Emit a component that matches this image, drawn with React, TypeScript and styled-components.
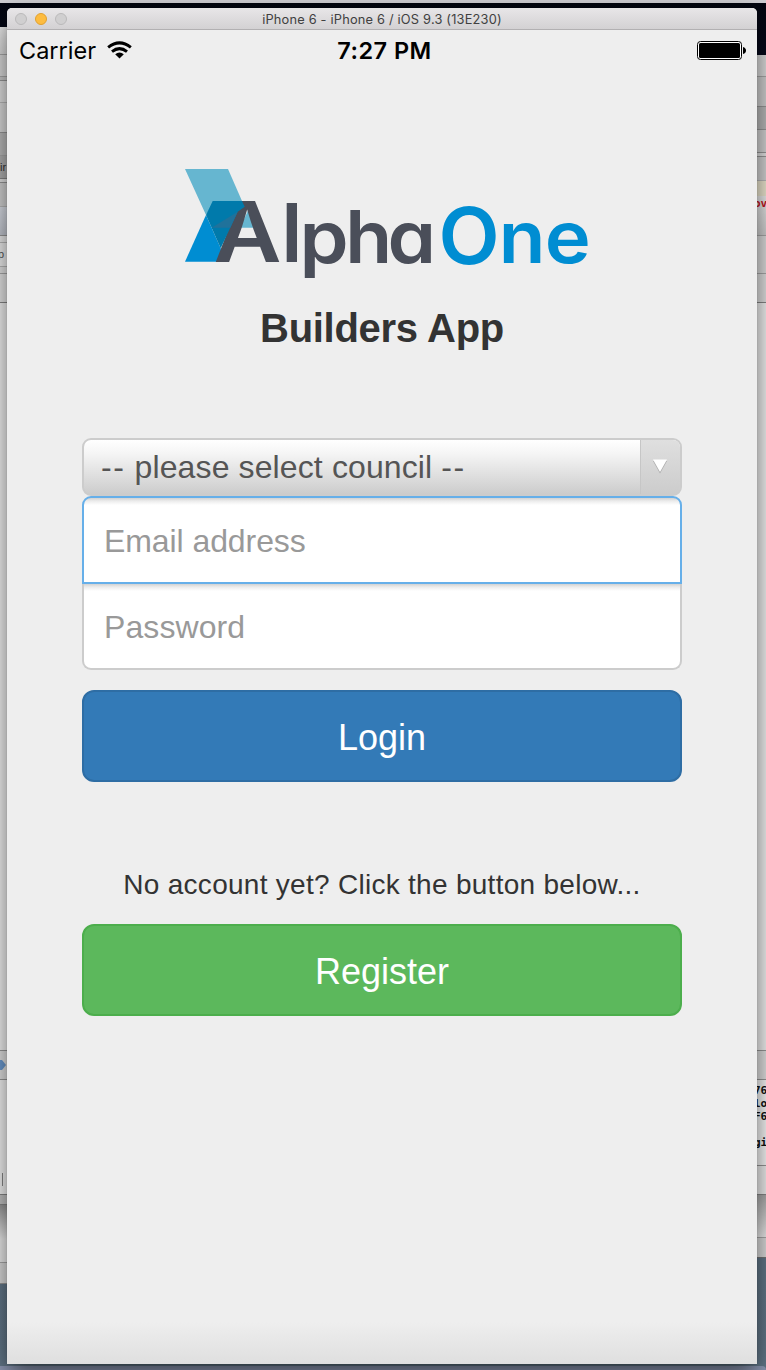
import React from 'react';
import styled, { createGlobalStyle } from 'styled-components';

const Global = createGlobalStyle`
  * { box-sizing: border-box; }
  html, body { margin: 0; padding: 0; overflow: hidden; }
`;

const helvetica = `'Liberation Sans', Arial, sans-serif`;
const system = `Inter, 'Liberation Sans', sans-serif`;

const Desktop = styled.div`
  width: 766px;
  height: 1370px;
  display: flex;
  flex-direction: column;
  overflow: hidden;
  background: linear-gradient(#03050f 0, #060a1c 60px, #566d80 61px, #64798b 100%);
`;
const MenuStrip = styled.div`
  flex: 0 0 3px;
  margin-bottom: 5px;
  background: #cfced3;
`;
const Stage = styled.div`
  display: grid;
  grid-template-columns: 7px 750px 9px;
  height: 1356px;
`;
const DockEdge = styled.div`
  flex: 0 0 4px;
  margin-top: 2px;
  background: #8f9ab6;
  border-radius: 0 5px 0 0;
`;
const Sliver = styled.div`
  display: flex;
  flex-direction: column;
  overflow: hidden;
`;
const Band = styled.div<{ $h: number; $bg: string; $line?: string }>`
  flex: 0 0 ${p => p.$h}px;
  background: ${p => p.$bg};
  border-bottom: ${p => (p.$line ? `1px solid ${p.$line}` : '0')};
  overflow: hidden;
  display: flex;
  align-items: center;
`;
const Scrap = styled.span<{ $color?: string; $shift?: number }>`
  font: 11px/13px ${helvetica};
  color: ${p => p.$color || '#333'};
  margin-left: ${p => p.$shift || 0}px;
  white-space: nowrap;
`;
const RedScrap = styled(Scrap)`
  font: bold 11px/13px 'DejaVu Sans Mono', monospace;
  align-self: flex-start;
  padding-top: 1px;
  margin-left: -3px;
`;
const LogLines = styled.pre`
  margin: 0 0 0 -3px;
  align-self: flex-start;
  padding-top: 4px;
  font: bold 11px/13px 'DejaVu Sans Mono', monospace;
  color: #111;
`;
const Tick = styled.i`
  width: 1px;
  height: 13px;
  margin: 93px 0 0 2px;
  align-self: flex-start;
  background: #888;
`;

const Window = styled.main`
  position: relative;
  z-index: 1;
  display: flex;
  flex-direction: column;
  border-radius: 5px 5px 0 0;
  overflow: hidden;
  background: linear-gradient(#eee 0, #eee calc(100% - 42px), #dfdfdf 100%);
  box-shadow: 0 0 1px rgba(0, 0, 0, 0.3), 0 10px 26px rgba(0, 0, 0, 0.6);
`;
const TitleBar = styled.header`
  flex: 0 0 22px;
  display: grid;
  grid-template-columns: 60px 1fr 60px;
  align-items: center;
  border-bottom: 1px solid #b2b0b2;
  background: linear-gradient(#e8e6e8, #d3d1d3);
`;
const Lights = styled.div`
  display: flex;
  gap: 8px;
  padding-left: 8px;
`;
const Light = styled.i<{ $on?: boolean }>`
  width: 12px;
  height: 12px;
  border-radius: 50%;
  background: ${p => (p.$on ? '#fdbc40' : '#d0cfd0')};
  border: 1px solid ${p => (p.$on ? '#e0a030' : '#bab9ba')};
`;
const Title = styled.div`
  padding-top: 2px;
  text-align: center;
  white-space: nowrap;
  color: #404040;
  font: 12.8px/19px ${system};
  letter-spacing: 0.2px;
`;

const StatusBar = styled.div`
  flex: 0 0 40px;
  display: grid;
  grid-template-columns: 1fr auto 1fr;
  align-items: center;
  padding: 0 11px 0 12px;
  color: #000;
  font: 23.5px/40px ${system};
`;
const Carrier = styled.div`
  display: flex;
  align-items: center;
  gap: 11px;
  padding-top: 2px;
  line-height: 38px;

  svg { margin-top: -2px; }
`;
const Clock = styled.div`
  padding: 2px 0 0 4px;
  font-weight: 600;
  line-height: 38px;
  letter-spacing: 0.45px;
`;
const BatterySlot = styled.div`
  display: flex;
  justify-content: flex-end;
`;

const Content = styled.section`
  display: flex;
  flex-direction: column;
  padding: 0 75px;
  font-family: ${helvetica};
`;
const LogoSlot = styled.div`
  height: 120px;
  margin: 93px 0 0 97px;
`;
const Heading = styled.h1`
  margin: 21px 0 86px;
  height: 48px;
  text-align: center;
  color: #333;
  font: bold 40px/48px ${helvetica};
  letter-spacing: -0.3px;
`;
const Select = styled.div`
  display: flex;
  height: 58px;
  border: 2px solid #ccc;
  border-radius: 9px;
  overflow: hidden;
  background: linear-gradient(#fff, #f5f5f5 25%, #ccc);
  color: #555;
  font-size: 32px;
  line-height: 55px;
`;
const SelectLabel = styled.span`
  flex: 1;
  padding-left: 17px;
  white-space: pre;
  letter-spacing: 0.12px;
`;
const Dashes = styled.span`
  letter-spacing: 1.6px;
`;
const SelectArrow = styled.span`
  width: 41px;
  margin-right: -1px;
  display: flex;
  align-items: center;
  justify-content: center;
  padding: 0 2px 2px 0;
  border-left: 1px solid #c6c6c6;
  background: linear-gradient(#dfdfdf, #ccc);
`;
const Field = styled.div<{ $focused?: boolean }>`
  height: ${p => (p.$focused ? 88 : 86)}px;
  padding-left: 20px;
  background: linear-gradient(#d2d2d2, #ececec 3px, #fff 7px);
  border: 2px solid ${p => (p.$focused ? '#66afe9' : '#ccc')};
  border-top-width: ${p => (p.$focused ? 2 : 0)}px;
  border-radius: ${p => (p.$focused ? '9px 9px 0 0' : '0 0 9px 9px')};
  color: #999;
  font-size: 32px;
  line-height: 86px;
  letter-spacing: ${p => (p.$focused ? -0.08 : 0.08)}px;
`;
const Button = styled.button<{ $bg: string; $edge: string }>`
  height: 92px;
  padding: 3px 0 0;
  border: 2px solid ${p => p.$edge};
  border-radius: 12px;
  background: ${p => p.$bg};
  color: #fff;
  font: 36px/48px ${helvetica};
`;
const LoginButton = styled(Button)`
  margin-top: 20px;
`;
const Hint = styled.p`
  margin: 82px 0 20px;
  height: 40px;
  text-align: center;
  white-space: nowrap;
  color: #333;
  font-size: 28px;
  line-height: 42px;
  letter-spacing: 0.28px;
`;

type BandData = { h: number; bg: string; line?: string; content?: React.ReactNode };

const leftBands: BandData[] = [
  { h: 19, bg: 'transparent' },
  { h: 28, bg: 'linear-gradient(#eee,#ddd)', line: '#aaa' },
  { h: 22, bg: '#dcdcdc', line: '#aaa' },
  { h: 4, bg: '#ccc', line: '#999' },
  { h: 22, bg: '#e2e2e2', line: '#bbb' },
  { h: 30, bg: '#ddd', line: '#999' },
  { h: 23, bg: '#bdbdbd', line: '#aaa' },
  { h: 23, bg: '#b3b3b3', line: '#888', content: <Scrap>ir</Scrap> },
  { h: 4, bg: '#e5e5e5', line: '#999' },
  { h: 24, bg: '#d5d5d5', line: '#bbb' },
  { h: 29, bg: 'linear-gradient(#dce0e8,#c5c9d2)', line: '#999' },
  { h: 7, bg: '#eee', line: '#bbb' },
  { h: 24, bg: '#f0f0f0', line: '#bbb', content: <Scrap $color="#555" $shift={-2}>p</Scrap> },
  { h: 7, bg: '#e6e6e6', line: '#aaa' },
  { h: 29, bg: '#e8e8e8', line: '#888' },
  { h: 748, bg: '#f4f4f4', line: '#999' },
  {
    h: 29, bg: '#e2e2e2', line: '#999',
    content: <svg width="7" height="12"><path d="M0 1h2l4 5-4 5H0z" fill="#6c9bd2" /></svg>,
  },
  { h: 115, bg: '#f6f6f6', line: '#888', content: <Tick /> },
  { h: 10, bg: '#c5c5c5', line: '#888' },
  { h: 58, bg: 'linear-gradient(#999,#eee 60%)', line: '#aaa' },
  { h: 21, bg: '#ddd', line: '#999' },
];

const rightBands: BandData[] = [
  { h: 47, bg: 'transparent' },
  { h: 22, bg: '#dedede', line: '#aaa' },
  { h: 30, bg: '#d2d2d2', line: '#999' },
  { h: 23, bg: '#bbb', line: '#999' },
  { h: 23, bg: '#d5d5d5', line: '#999' },
  { h: 4, bg: '#e5e5e5', line: '#999' },
  { h: 24, bg: '#d5d5d5', line: '#bbb' },
  { h: 15, bg: '#efe9d2' },
  { h: 40, bg: 'linear-gradient(#eee,#d0d0d0)', line: '#aaa', content: <RedScrap $color="#c8141e">ov</RedScrap> },
  { h: 38, bg: '#dedede', line: '#aaa' },
  { h: 29, bg: '#e2e2e2', line: '#888' },
  { h: 748, bg: '#f4f4f4', line: '#999' },
  { h: 29, bg: '#e2e2e2', line: '#999' },
  { h: 86, bg: '#f8f8f8', line: '#999', content: <LogLines>{'76\nlo\nF6\n\ngi'}</LogLines> },
  { h: 29, bg: '#f0f0f0', line: '#888' },
  { h: 43, bg: 'linear-gradient(#aaa,#eee)', line: '#aaa' },
  { h: 20, bg: '#ddd', line: '#777' },
];

const Edge = ({ bands }: { bands: BandData[] }) => (
  <Sliver>
    {bands.map((b, i) => (
      <Band key={i} $h={b.h} $bg={b.bg} $line={b.line}>{b.content}</Band>
    ))}
  </Sliver>
);

const Wifi = () => (
  <svg width="25" height="18" viewBox="0 0 26 18">
    <g fill="none" stroke="#000" strokeWidth="3.1">
      <path d="M1.2 6.200Q13-3 24.800 6.200" />
      <path d="M5.200 10.700Q13 4.400 20.800 10.700" />
    </g>
    <path d="M8.500 13.400Q13 9.800 17.500 13.400L13 17.800z" />
  </svg>
);

const Battery = () => (
  <svg width="49" height="19" viewBox="0 0 49 19">
    <rect x=".5" y=".5" width="44" height="18" rx="3" fill="#fff" stroke="#000" />
    <rect x="2" y="2" width="41" height="15" rx="1.5" />
    <path d="M46 6q3 1 3 3.500T46 13z" />
  </svg>
);

const Glyph = styled.text`
  font-family: Inter, sans-serif;
  font-weight: 600;
  font-feature-settings: 'cv11' 1;
`;

type LetterProps = { x: number; y: number; size: number; stretch?: number; children: string };
const Letter = ({ x, y, size, stretch = 1, children }: LetterProps) => (
  <Glyph transform={`translate(${x} ${y}) scale(${stretch} 1)`} fontSize={size}>{children}</Glyph>
);

const Logo = () => (
  <svg width="410" height="120" viewBox="0 0 410 120" role="img" aria-label="AlphaOne">
    <path d="M6 6h43l14 32-29.300 3L27 52z" fill="#66b6d0" />
    <path d="M69.300 47l8 17.700H61z" fill="#66b6d0" />
    <path d="M27 52l14.700 33.300 2 13.400H6z" fill="#008dd2" />
    <g fill="#4a4e59">
      <Letter x={34.4} y={98.7} size={83.5} stretch={1.12}>A</Letter>
      <Letter x={102.2} y={98.7} size={81}>l</Letter>
      <Letter x={120.6} y={100} size={72} stretch={1.095}>p</Letter>
      <Letter x={166.2} y={100} size={73} stretch={1.05}>h</Letter>
      <Letter x={208.5} y={100} size={72} stretch={1.08}>a</Letter>
    </g>
    <g fill="#008dd2">
      <Letter x={259.4} y={101} size={78} stretch={1.02}>O</Letter>
      <Letter x={319.8} y={100} size={72} stretch={1.06}>n</Letter>
      <Letter x={365.8} y={100} size={72} stretch={1.08}>e</Letter>
    </g>
    <path d="M33.700 38H63l2.700 5.700-7 5-17 36.600L27 52z" fill="#007aab" />
    <path d="M32.700 64.700l26-16-7.400 16z" fill="#20729b" />
  </svg>
);

export default function App() {
  return (
    <Desktop>
      <Global />
      <MenuStrip />
      <Stage>
        <Edge bands={leftBands} />
        <Window>
          <TitleBar>
            <Lights><Light /><Light $on /><Light /></Lights>
            <Title>iPhone 6 - iPhone 6 / iOS 9.3 (13E230)</Title>
          </TitleBar>
          <StatusBar>
            <Carrier>Carrier<Wifi /></Carrier>
            <Clock>7:27 PM</Clock>
            <BatterySlot><Battery /></BatterySlot>
          </StatusBar>
          <Content>
            <LogoSlot><Logo /></LogoSlot>
            <Heading>Builders App</Heading>
            <Select>
              <SelectLabel><Dashes>--</Dashes> please select council <Dashes>--</Dashes></SelectLabel>
              <SelectArrow>
                <svg width="16" height="16" viewBox="0 0 16 16">
                  <path d="M1 3h14L8 15.500z" fill="#aaa" />
                  <path d="M1 1.500h14L8 14z" fill="#fff" />
                </svg>
              </SelectArrow>
            </Select>
            <Field $focused>Email address</Field>
            <Field>Password</Field>
            <LoginButton $bg="#337ab7" $edge="#2e6da4">Login</LoginButton>
            <Hint>No account yet? Click the button below...</Hint>
            <Button $bg="#5cb85c" $edge="#4cae4c">Register</Button>
          </Content>
        </Window>
        <Edge bands={rightBands} />
      </Stage>
      <DockEdge />
    </Desktop>
  );
}
